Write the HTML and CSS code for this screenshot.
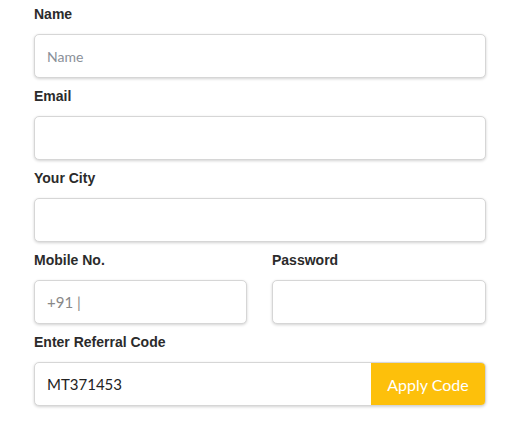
FILE: index.html
```
<!DOCTYPE html>
<html>
<head>
<meta charset="utf-8">
<link rel="stylesheet" href="styles.css">
</head>
<body>
<form class="form">
  <div class="field">
    <label class="label">Name</label>
    <input class="input" type="text" placeholder="Name">
  </div>
  <div class="field">
    <label class="label">Email</label>
    <input class="input" type="text">
  </div>
  <div class="field">
    <label class="label">Your City</label>
    <input class="input" type="text">
  </div>
  <div class="row">
    <div class="field">
      <label class="label">Mobile No.</label>
      <div class="input phone">+91 |</div>
    </div>
    <div class="field">
      <label class="label">Password</label>
      <input class="input" type="password">
    </div>
  </div>
  <div class="field">
    <label class="label">Enter Referral Code</label>
    <div class="input ref">
      <span class="ref-text">MT371453</span>
      <button type="button" class="apply">Apply Code</button>
    </div>
  </div>
</form>
</body>
</html>
```
FILE: styles.css
```
* { box-sizing: border-box; }
html, body { margin: 0; background: #fff; }
body { padding: 6px 0 0 34px; }
.form { width: 452px; }
.field { display: flex; flex-direction: column; margin-bottom: 10px; }
.label {
  font-family: "Liberation Sans", Arial, sans-serif;
  font-weight: bold;
  font-size: 14px;
  line-height: 16px;
  color: #2b2b2b;
  margin-bottom: 12px;
}
.input {
  height: 44px;
  width: 100%;
  border: 1px solid #d6d6d6;
  border-radius: 5px;
  box-shadow: 0 1px 3px rgba(0,0,0,0.18);
  background: #fff;
  padding: 0 12px;
  font-family: "Lato", "Open Sans", sans-serif;
  font-size: 14px;
  color: #333;
  outline: none;
}
.input::placeholder { color: #8a9099; }
.row { display: grid; grid-template-columns: 213px 214px; gap: 25px; }
.phone { display: flex; align-items: center; color: #888; font-size: 15px; }
.ref { display: flex; align-items: center; padding: 0 0 0 12px; overflow: hidden; }
.ref-text { flex: 1; font-size: 15px; color: #222; }
.apply {
  width: 114px;
  height: 100%;
  border: none;
  background: #fdc00b;
  color: #fff;
  font-family: "Lato", "Open Sans", sans-serif;
  font-size: 16px;
  padding: 0;
}
```
